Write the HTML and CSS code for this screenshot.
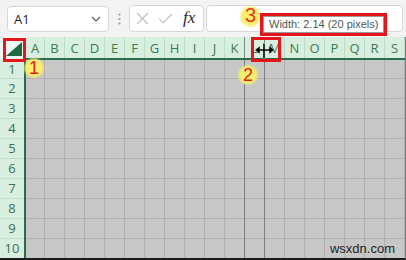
FILE: index.html
```html
<!DOCTYPE html>
<html>
<head>
<meta charset="utf-8">
<link rel="stylesheet" href="styles.css">
</head>
<body>
<div class="app">
  <div class="toolbar">
    <div class="namebox">
      <span class="ref">A1</span>
      <svg class="chev" width="10" height="6" viewBox="0 0 10 6"><path d="M1 1 L5 5 L9 1" fill="none" stroke="#5a5a5a" stroke-width="1.2"/></svg>
    </div>
    <div class="grip">
      <svg width="3" height="12" viewBox="0 0 3 12"><circle cx="1.5" cy="1.5" r="1.1" fill="#9a9a9a"/><circle cx="1.5" cy="6" r="1.1" fill="#9a9a9a"/><circle cx="1.5" cy="10.5" r="1.1" fill="#9a9a9a"/></svg>
    </div>
    <div class="fxbox">
      <svg class="ic-x" width="13" height="13" viewBox="0 0 13 13"><path d="M1 1 L12 12 M12 1 L1 12" stroke="#bdbdbd" stroke-width="1.1" fill="none"/></svg>
      <svg class="ic-ok" width="15" height="11" viewBox="0 0 15 11"><path d="M1 5.5 L5 10 L14 1" stroke="#bdbdbd" stroke-width="1.1" fill="none"/></svg>
      <span class="fx">fx</span>
    </div>
    <div class="formula"></div>
  </div>

  <div class="sheet">
    <div class="corner">
      <svg width="16" height="14" viewBox="0 0 16 14"><polygon points="16,0 16,14 0,14" fill="#1f6a3f"/></svg>
    </div>
    <div class="colheads">
      <div class="ch first">A</div>
      <div class="ch">B</div>
      <div class="ch">C</div>
      <div class="ch">D</div>
      <div class="ch">E</div>
      <div class="ch">F</div>
      <div class="ch">G</div>
      <div class="ch">H</div>
      <div class="ch">I</div>
      <div class="ch">J</div>
      <div class="ch dark">K</div>
      <div class="ch dark">L</div>
      <div class="ch">M</div>
      <div class="ch">N</div>
      <div class="ch">O</div>
      <div class="ch">P</div>
      <div class="ch">Q</div>
      <div class="ch">R</div>
      <div class="ch">S</div>
      <div class="ch"></div>
    </div>
    <div class="rowheads">
      <div class="rh first">1</div>
      <div class="rh">2</div>
      <div class="rh">3</div>
      <div class="rh">4</div>
      <div class="rh">5</div>
      <div class="rh">6</div>
      <div class="rh">7</div>
      <div class="rh">8</div>
      <div class="rh">9</div>
      <div class="rh">10</div>
    </div>
    <div class="cells">
      <div class="col first"></div>
      <div class="col"></div>
      <div class="col"></div>
      <div class="col"></div>
      <div class="col"></div>
      <div class="col"></div>
      <div class="col"></div>
      <div class="col"></div>
      <div class="col"></div>
      <div class="col"></div>
      <div class="col dark"></div>
      <div class="col dark"></div>
      <div class="col"></div>
      <div class="col"></div>
      <div class="col"></div>
      <div class="col"></div>
      <div class="col"></div>
      <div class="col"></div>
      <div class="col"></div>
      <div class="col"></div>
    </div>
  </div>

  <div class="badge b1">1</div>
  <div class="badge b2">2</div>
  <div class="badge b3">3</div>
  <div class="mark m1"></div>
  <div class="mark m2"></div>
  <div class="mark m3"><div class="tip">Width: 2.14 (20 pixels)</div></div>
  <svg class="cursor" width="22" height="18" viewBox="0 0 22 18">
    <g stroke="#fff" stroke-width="2" fill="#fff" stroke-linejoin="round">
      <path d="M10 1 V17 M3 8 H17"/>
    </g>
    <g stroke="#000" stroke-width="1.6" fill="#000">
      <path d="M10 1.5 V16.5 M3 8 H17" fill="none"/>
      <path d="M1.5 8 L5.5 4.8 V11.2 Z M19.5 8 L15.5 4.8 V11.2 Z" stroke-width="0.5"/>
    </g>
  </svg>
  <div class="wm">wsxdn.com</div>
</div>
</body>
</html>
```

FILE: styles.css
```css
html, body {
  margin: 0;
  padding: 0;
  background: #ffffff;
}

.app {
  position: relative;
  width: 406px;
  height: 260px;
  overflow: hidden;
  background: #f3f3f3;
  font-family: "Open Sans", "Noto Sans", sans-serif;
}

/* ---------- toolbar ---------- */
.toolbar {
  height: 37px;
  display: flex;
  align-items: center;
  padding-left: 7px;
  box-sizing: border-box;
}

.namebox {
  width: 102px;
  height: 26px;
  box-sizing: border-box;
  border: 1px solid #d6d6d6;
  border-radius: 4px;
  background: #ffffff;
  display: flex;
  align-items: center;
  justify-content: space-between;
  padding: 0 7px 0 6px;
}

.ref {
  font-size: 13px;
  color: #1e1e1e;
}

.grip {
  width: 20px;
  display: flex;
  justify-content: center;
  align-items: center;
}

.fxbox {
  width: 75px;
  height: 27px;
  box-sizing: border-box;
  border: 1px solid #d6d6d6;
  border-radius: 4px;
  background: #ffffff;
  display: flex;
  align-items: center;
  padding-left: 6px;
  margin-right: 2px;
}

.ic-x {
  margin-right: 9px;
}

.ic-ok {
  margin-right: 10px;
}

.fx {
  font-family: "Liberation Serif", "DejaVu Serif", serif;
  font-style: italic;
  font-size: 17px;
  color: #2a2a2a;
  margin-top: -2px;
}

.formula {
  flex: 1;
  height: 27px;
  box-sizing: border-box;
  border: 1px solid #d6d6d6;
  border-radius: 4px;
  background: #ffffff;
  margin-right: 3px;
}

/* ---------- sheet ---------- */
.sheet {
  height: 223px;
  display: grid;
  grid-template-columns: 26px auto;
  grid-template-rows: 23px auto;
  overflow: hidden;
  box-sizing: border-box;
  border-bottom: 2px solid #1c1c1c;
  border-right: 1px solid #7a7a7a;
}

.corner {
  background: #eef7f1;
  display: flex;
  align-items: flex-end;
  justify-content: flex-end;
  padding: 0 4px 4px 0;
  box-sizing: border-box;
}

.colheads {
  display: flex;
  background: #d8efdf;
  border-bottom: 2px solid #2b6d4b;
  box-sizing: border-box;
  overflow: hidden;
}

.ch {
  flex: none;
  width: 20px;
  box-sizing: border-box;
  border-right: 1px solid #bcdcc6;
  text-align: center;
  font-size: 13px;
  line-height: 22px;
  color: #3c7a56;
}

.ch.first {
  width: 19px;
}

.ch.dark {
  border-right-color: #7a8a80;
}

.rowheads {
  background: #d8efdf;
  border-right: 2px solid #2b6d4b;
  overflow: hidden;
}

.rh {
  height: 20px;
  box-sizing: border-box;
  border-bottom: 1px solid #c3dfcb;
  text-align: center;
  font-size: 13px;
  line-height: 19px;
  color: #3c6e54;
}

.rh.first {
  height: 19px;
}

.cells {
  display: flex;
  overflow: hidden;
  background-color: #c7c7c7;
  background-image: repeating-linear-gradient(to bottom, transparent 0 18px, #b0b0b0 18px 19px, transparent 19px 20px);
}

.col {
  flex: none;
  width: 20px;
  box-sizing: border-box;
  border-right: 1px solid #b0b0b0;
}

.col.first {
  width: 19px;
}

.col.dark {
  border-right-color: #7d7d7d;
}

/* ---------- annotations ---------- */
.mark {
  position: absolute;
  box-sizing: border-box;
  border: 3px solid #e4161c;
}

.m1 {
  left: 3px;
  top: 38px;
  width: 23px;
  height: 24px;
}

.m2 {
  left: 251px;
  top: 37px;
  width: 30px;
  height: 25px;
}

.m3 {
  left: 260px;
  top: 13px;
  width: 127px;
  height: 23px;
  background: #ffffff;
}

.tip {
  height: 100%;
  box-sizing: border-box;
  border: 1px solid #9a9a9a;
  font-family: "Liberation Sans", Arial, sans-serif;
  font-size: 11px;
  line-height: 15px;
  color: #4d5a53;
  padding-left: 5px;
  white-space: nowrap;
}

.badge {
  position: absolute;
  width: 22px;
  height: 22px;
  border-radius: 50%;
  background: radial-gradient(circle, #f6ee6c 0 50%, rgba(246, 238, 108, 0) 72%);
  color: #e01e1e;
  font-family: "Liberation Sans", Arial, sans-serif;
  font-size: 18px;
  line-height: 22px;
  text-align: center;
}

.b1 {
  left: 23px;
  top: 57px;
}

.b2 {
  left: 237px;
  top: 64px;
}

.b3 {
  left: 239px;
  top: 5px;
  width: 23px;
  height: 23px;
  font-size: 20px;
  line-height: 21px;
  color: #e8351e;
}

.cursor {
  position: absolute;
  left: 254px;
  top: 42px;
}

.wm {
  position: absolute;
  right: 11px;
  bottom: 4px;
  font-family: "Liberation Sans", Arial, sans-serif;
  font-size: 13px;
  color: #1e1e1e;
}
```
